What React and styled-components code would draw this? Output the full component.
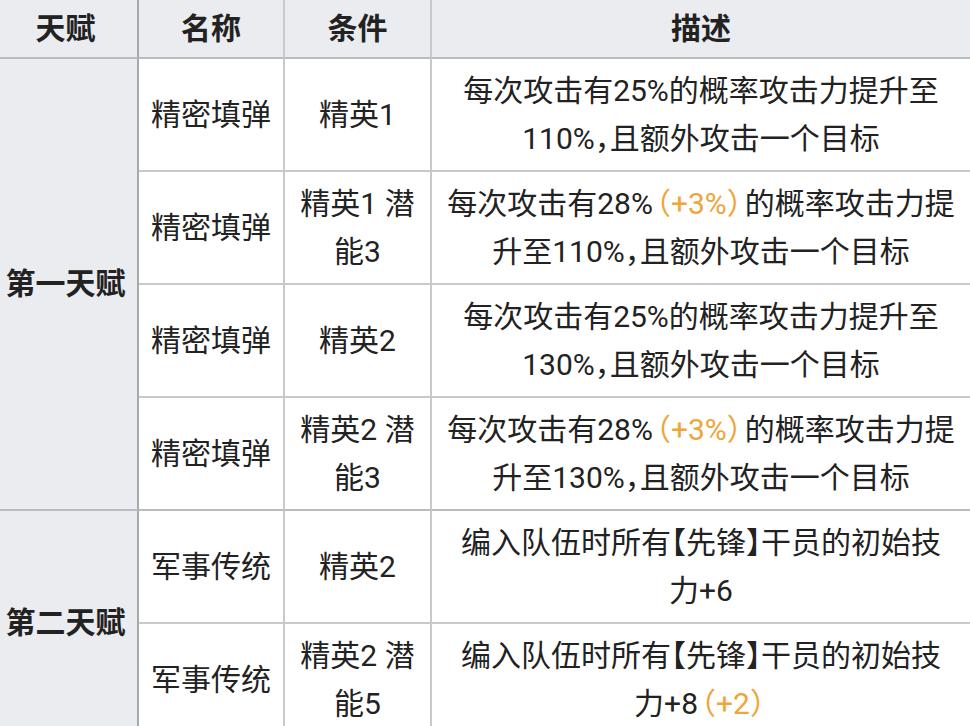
import React from "react";
import styled, { createGlobalStyle } from "styled-components";

const Global = createGlobalStyle`
  html, body { margin: 0; padding: 0; background: #ffffff; }
  body { font-family: Roboto, "Noto Sans CJK SC", sans-serif; color: #222222; }
`;

const Table = styled.table`
  width: 970px;
  table-layout: fixed;
  border-collapse: separate;
  border-spacing: 0;
  font-size: 30px;
  line-height: 48px;
  text-align: center;
  font-feature-settings: "halt" 1;
`;

const HeadCell = styled.th`
  background: #eaecf0;
  font-weight: 700;
  padding: ${(p) => (p.$strong ? "4.5px 6px 4.5px 0" : "4.5px 8px")};
  border-bottom: 2px solid #b9bcc1;
  border-right: ${(p) => (p.$last ? "none" : p.$strong ? "2px solid #a6a9ad" : "2px solid #c8c9cc")};
  vertical-align: middle;
`;

const GroupCell = styled.th`
  background: #eaecf0;
  font-weight: 700;
  padding: 7.5px 6px 7.5px 0;
  border-right: 2px solid #a6a9ad;
  border-bottom: 2px solid #b9bcc1;
  vertical-align: middle;
  white-space: nowrap;
`;

const Cell = styled.td`
  background: #ffffff;
  font-weight: 400;
  padding: ${(p) => (p.$last ? "7.5px 14.5px" : "7.5px 8px")};
  border-right: ${(p) => (p.$last ? "none" : "2px solid #c8c9cc")};
  border-bottom: 2px solid ${(p) => (p.$groupEnd ? "#b9bcc1" : "#c8c9cc")};
  vertical-align: middle;
  word-break: normal;
`;

const Plus = styled.span`
  color: #eea53a;
  margin: 0 3px;
`;

const groups = [
  {
    name: "第一天赋",
    rows: [
      { n: "精密填弹", c: "精英1", d: ["每次攻击有25%的概率攻击力提升至110%，且额外攻击一个目标"] },
      { n: "精密填弹", c: "精英1 潜能3", d: ["每次攻击有28%", { p: "（+3%）" }, "的概率攻击力提升至110%，且额外攻击一个目标"] },
      { n: "精密填弹", c: "精英2", d: ["每次攻击有25%的概率攻击力提升至130%，且额外攻击一个目标"] },
      { n: "精密填弹", c: "精英2 潜能3", d: ["每次攻击有28%", { p: "（+3%）" }, "的概率攻击力提升至130%，且额外攻击一个目标"] },
    ],
  },
  {
    name: "第二天赋",
    rows: [
      { n: "军事传统", c: "精英2", d: ["编入队伍时所有【先锋】干员的初始技力+6"] },
      { n: "军事传统", c: "精英2 潜能5", d: ["编入队伍时所有【先锋】干员的初始技力+8", { p: "（+2）" }] },
    ],
  },
];

export default function App() {
  return (
    <>
      <Global />
      <Table>
        <colgroup>
          <col style={{ width: 139 }} />
          <col style={{ width: 146 }} />
          <col style={{ width: 147 }} />
          <col style={{ width: 538 }} />
        </colgroup>
        <thead>
          <tr>
            <HeadCell $strong>天赋</HeadCell>
            <HeadCell>名称</HeadCell>
            <HeadCell>条件</HeadCell>
            <HeadCell $last>描述</HeadCell>
          </tr>
        </thead>
        <tbody>
          {groups.map((g) =>
            g.rows.map((r, i) => {
              const end = i === g.rows.length - 1;
              return (
                <tr key={g.name + i}>
                  {i === 0 && <GroupCell rowSpan={g.rows.length}>{g.name}</GroupCell>}
                  <Cell $groupEnd={end}>{r.n}</Cell>
                  <Cell $groupEnd={end}>{r.c}</Cell>
                  <Cell $groupEnd={end} $last>
                    {r.d.map((part, k) =>
                      typeof part === "string" ? part : <Plus key={k}>{part.p}</Plus>
                    )}
                  </Cell>
                </tr>
              );
            })
          )}
        </tbody>
      </Table>
    </>
  );
}
